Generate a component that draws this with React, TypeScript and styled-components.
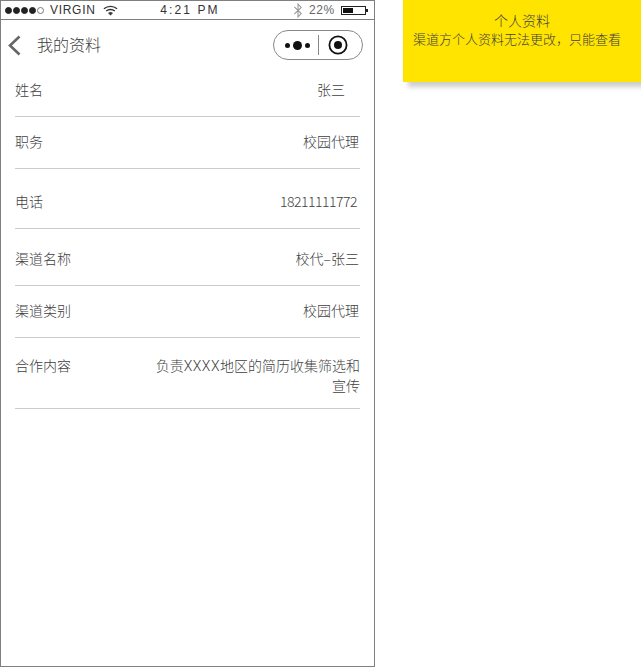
import styled, { createGlobalStyle } from "styled-components";

const GlobalStyle = createGlobalStyle`
  html, body {
    margin: 0;
    padding: 0;
    background: #fff;
    overflow: hidden;
  }
  body {
    font-family: "Noto Sans CJK SC", "Liberation Sans", sans-serif;
  }
`;

const rows = [
  { label: "姓名", value: "张三", height: 46, shift: 5, inset: 15 },
  { label: "职务", value: "校园代理", height: 52, shift: 2, inset: 1 },
  { label: "电话", value: "18211111772", height: 60, shift: -2, inset: 3, digits: true },
  { label: "渠道名称", value: "校代–张三", height: 57, shift: -1, inset: 1 },
  { label: "渠道类别", value: "校园代理", height: 52, shift: 2, inset: 1 },
];

const App = () => {
  return (
    <Page>
      <GlobalStyle />
      <Phone>
        <StatusBar>
          <Carrier>
            <Signal>
              <Dot />
              <Dot />
              <Dot />
              <Dot />
              <Dot $empty />
            </Signal>
            <StatusText>VIRGIN</StatusText>
            <svg width="15" height="11" viewBox="0 0 16 11" fill="none" stroke="#333">
              <path d="M1 3.6C5 .2 11 .2 15 3.6" strokeWidth="1.5" />
              <path d="M3.4 6C6 3.8 10 3.8 12.6 6" strokeWidth="1.5" />
              <path d="M5.8 8.2C7 7.2 9 7.2 10.2 8.2L8 10.6Z" fill="#333" strokeWidth="0.6" />
            </svg>
          </Carrier>
          <Clock>4:21 PM</Clock>
          <Battery>
            <svg width="10" height="15" viewBox="0 0 8 14" fill="none" stroke="#999" strokeWidth="1">
              <path d="M0.6 3.6L7 9.8L4 13V1L7 4.2L0.6 10.4" />
            </svg>
            <BatteryText>22%</BatteryText>
            <BatteryShell>
              <BatteryFill />
            </BatteryShell>
            <BatteryTip />
          </Battery>
        </StatusBar>
        <NavBar>
          <svg width="13" height="21" viewBox="0 0 13 21" fill="none" stroke="#666" strokeWidth="2.6">
            <path d="M11.5 1.5L2 10.5L11.5 19.5" />
          </svg>
          <Title>我的资料</Title>
          <Capsule>
            <Dots>
              <SmallDot />
              <BigDot />
              <SmallDot />
            </Dots>
            <CapsuleLine />
            <svg width="20" height="20" viewBox="0 0 20 20">
              <circle cx="10" cy="10" r="8.6" fill="none" stroke="#111" strokeWidth="1.8" />
              <circle cx="10" cy="10" r="4" fill="#111" />
            </svg>
          </Capsule>
        </NavBar>
        <List>
          {rows.map((row) => (
            <Row key={row.label} $height={row.height} $shift={row.shift}>
              <Label>{row.label}</Label>
              <Value $inset={row.inset} $digits={row.digits}>
                {row.value}
              </Value>
            </Row>
          ))}
          <TallRow>
            <Label>合作内容</Label>
            <LongValue>
              负责<Latin>XXXX</Latin>地区的简历收集筛选和宣传
            </LongValue>
          </TallRow>
        </List>
      </Phone>
      <Note>
        <NoteTitle>个人资料</NoteTitle>
        <NoteText>渠道方个人资料无法更改，只能查看</NoteText>
      </Note>
    </Page>
  );
};

const Page = styled.div`
  display: flex;
  align-items: flex-start;
  width: 641px;
  height: 667px;
  color: #404040;
  font-weight: 300;
`;

const Phone = styled.div`
  box-sizing: border-box;
  flex: none;
  width: 375px;
  height: 667px;
  border: 1px solid #7f7f7f;
`;

const StatusBar = styled.div`
  box-sizing: border-box;
  display: grid;
  grid-template-columns: 1fr auto 1fr;
  align-items: center;
  height: 19px;
  padding: 0 6px 0 4px;
  border-bottom: 1px solid #7f7f7f;
  font-family: "Liberation Sans", sans-serif;
  font-size: 12px;
  font-weight: 400;
  color: #333;
`;

const Carrier = styled.div`
  display: flex;
  align-items: center;
  gap: 5px;
`;

const Signal = styled.div`
  display: flex;
  gap: 1px;
`;

const Dot = styled.span<{ $empty?: boolean }>`
  box-sizing: border-box;
  width: 7px;
  height: 7px;
  border-radius: 50%;
  background: ${(p) => (p.$empty ? "#fff" : "#222")};
  border: 1px solid ${(p) => (p.$empty ? "#777" : "#222")};
`;

const StatusText = styled.span`
  letter-spacing: 0.7px;
  margin: 0 2px 0 1px;
`;

const Clock = styled.span`
  letter-spacing: 2.1px;
  margin-left: 7px;
`;

const Battery = styled.div`
  display: flex;
  align-items: center;
  justify-content: flex-end;
`;

const BatteryText = styled.span`
  margin: 0 6px 0 6px;
  letter-spacing: 0.7px;
  color: #666;
`;

const BatteryShell = styled.div`
  box-sizing: border-box;
  width: 25px;
  height: 9px;
  padding: 1px;
  border: 1px solid #222;
`;

const BatteryFill = styled.div`
  width: 10px;
  height: 100%;
  background: #111;
`;

const BatteryTip = styled.span`
  width: 2px;
  height: 3px;
  background: #222;
`;

const NavBar = styled.div`
  display: flex;
  align-items: center;
  height: 51px;
  padding: 0 11px 1px 7px;
  box-sizing: border-box;
`;

const Title = styled.div`
  margin-left: 16px;
  padding-bottom: 3px;
  font-size: 16px;
`;

const Capsule = styled.div`
  box-sizing: border-box;
  display: flex;
  align-items: center;
  width: 90px;
  height: 30px;
  margin-left: auto;
  padding: 0 8px 0 11px;
  border: 1px solid #888;
  border-radius: 15px;
`;

const Dots = styled.div`
  display: flex;
  align-items: center;
  gap: 3px;
`;

const SmallDot = styled.span`
  width: 5px;
  height: 5px;
  border-radius: 50%;
  background: #111;
`;

const BigDot = styled.span`
  width: 9px;
  height: 9px;
  border-radius: 50%;
  background: #111;
`;

const CapsuleLine = styled.span`
  width: 1px;
  height: 20px;
  margin: 0 9px 0 8px;
  background: #888;
`;

const List = styled.div`
  display: flex;
  flex-direction: column;
  margin: 0 14px;
`;

const Row = styled.div<{ $height: number; $shift: number }>`
  box-sizing: border-box;
  display: flex;
  align-items: center;
  justify-content: space-between;
  height: ${(p) => p.$height}px;
  padding-bottom: ${(p) => Math.max(p.$shift, 0) * 2}px;
  padding-top: ${(p) => Math.max(-p.$shift, 0) * 2}px;
  border-bottom: 1px solid #ccc;
  font-size: 14px;
`;

const Label = styled.span`
  flex: none;
`;

const Value = styled.span<{ $inset: number; $digits?: boolean }>`
  padding-right: ${(p) => p.$inset}px;
  letter-spacing: ${(p) => (p.$digits ? "-0.5px" : "0")};
`;

const TallRow = styled.div`
  box-sizing: border-box;
  display: flex;
  justify-content: space-between;
  height: 71px;
  padding-top: 17px;
  border-bottom: 1px solid #ccc;
  font-size: 14px;
  line-height: 20px;
`;

const LongValue = styled.div`
  width: 206px;
  text-align: right;
`;

const Latin = styled.span`
  font-family: Roboto, sans-serif;
  line-height: 0;
  letter-spacing: 0.5px;
`;

const Note = styled.div`
  box-sizing: border-box;
  flex: none;
  width: 238px;
  height: 82px;
  margin-left: 28px;
  padding-top: 11px;
  background: #ffe400;
  box-shadow: 5px 5px 5px rgba(0, 0, 0, 0.2);
  text-align: center;
`;

const NoteTitle = styled.div`
  font-size: 14px;
  line-height: 19px;
`;

const NoteText = styled.div`
  padding-right: 10px;
  font-size: 13px;
  line-height: 18px;
`;

export default App;
